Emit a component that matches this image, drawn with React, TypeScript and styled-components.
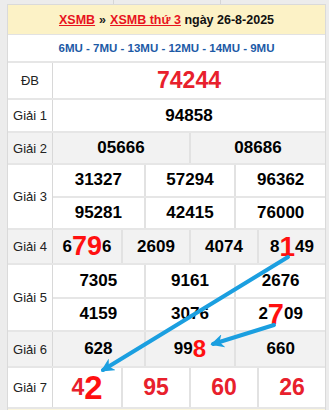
import React from 'react';
import styled, { createGlobalStyle } from 'styled-components';

const GlobalStyle = createGlobalStyle`
  html, body {
    margin: 0;
    padding: 0;
    background: #ececec;
    font-family: "Liberation Sans", Arial, sans-serif;
  }
`;

type Seg = { t: string; size?: number };
type Cell = Seg[];

interface Prize {
  label: string;
  height: number;
  alt?: boolean;
  red?: boolean;
  big?: boolean;
  rows: Cell[][];
}

const n = (s: string): Cell => [{ t: s }];

const prizes: Prize[] = [
  { label: 'ĐB', height: 35, red: true, big: true, rows: [[n('74244')]] },
  { label: 'Giải 1', height: 31, rows: [[n('94858')]] },
  { label: 'Giải 2', height: 30, alt: true, rows: [[n('05666'), n('08686')]] },
  {
    label: 'Giải 3',
    height: 63,
    rows: [
      [n('31327'), n('57294'), n('96362')],
      [n('95281'), n('42415'), n('76000')],
    ],
  },
  {
    label: 'Giải 4',
    height: 33,
    alt: true,
    rows: [
      [
        [{ t: '6' }, { t: '79', size: 27 }, { t: '6' }],
        n('2609'),
        n('4074'),
        [{ t: '8' }, { t: '1', size: 28 }, { t: '49' }],
      ],
    ],
  },
  {
    label: 'Giải 5',
    height: 65,
    rows: [
      [n('7305'), n('9161'), n('2676')],
      [n('4159'), n('3076'), [{ t: '2' }, { t: '7', size: 29 }, { t: '09' }]],
    ],
  },
  {
    label: 'Giải 6',
    height: 34,
    alt: true,
    rows: [[n('628'), [{ t: '99' }, { t: '8', size: 24 }], n('660')]],
  },
  {
    label: 'Giải 7',
    height: 39,
    red: true,
    big: true,
    rows: [[[{ t: '4' }, { t: '2', size: 33 }], n('95'), n('60'), n('26')]],
  },
];

export default function App() {
  return (
    <Page>
      <GlobalStyle />
      <PrevStrip>
        <span />
        <span />
        <span />
      </PrevStrip>
      <Table>
        <Header>
          <HeadLink href="#">XSMB</HeadLink>
          <Sep>»</Sep>
          <HeadLink href="#">XSMB thứ 3</HeadLink>
          <span> ngày 26-8-2025</span>
        </Header>
        <CodeRow>6MU - 7MU - 13MU - 12MU - 14MU - 9MU</CodeRow>
        {prizes.map((p) => (
          <PrizeRow key={p.label} $h={p.height} $alt={p.alt}>
            <Label>{p.label}</Label>
            <Numbers>
              {p.rows.map((row, i) => (
                <SubRow key={i} $cols={row.length}>
                  {row.map((cell, j) => (
                    <Num key={j} $red={p.red} $big={p.big}>
                      {cell.map((s, k) =>
                        s.size ? (
                          <Hot key={k} $size={s.size}>
                            {s.t}
                          </Hot>
                        ) : (
                          <React.Fragment key={k}>{s.t}</React.Fragment>
                        )
                      )}
                    </Num>
                  ))}
                </SubRow>
              ))}
            </Numbers>
          </PrizeRow>
        ))}
        <Footer />
      </Table>
      <Arrows width="329" height="410" viewBox="0 0 329 410">
        <defs>
          <marker
            id="head"
            viewBox="0 0 10 10"
            refX="8"
            refY="5"
            markerWidth="3.4"
            markerHeight="3.4"
            orient="auto"
          >
            <path d="M0,0 L10,5 L0,10 L3,5 z" fill="#1b9fe0" />
          </marker>
        </defs>
        <line
          x1="288"
          y1="257"
          x2="103"
          y2="370"
          stroke="#1b9fe0"
          strokeWidth="4"
          strokeLinecap="round"
          markerEnd="url(#head)"
        />
        <line
          x1="274"
          y1="325"
          x2="213"
          y2="344"
          stroke="#1b9fe0"
          strokeWidth="4"
          strokeLinecap="round"
          markerEnd="url(#head)"
        />
      </Arrows>
    </Page>
  );
}

const Page = styled.div`
  position: relative;
  width: 329px;
  height: 410px;
  overflow: hidden;
`;

const PrevStrip = styled.div`
  display: grid;
  grid-template-columns: 105px 107px 1fr;
  height: 4px;
  margin: 0 3px 0 8px;

  span + span {
    border-left: 1px solid #d6d6d6;
  }
`;

const Table = styled.div`
  margin-left: 7px;
  width: 319px;
  box-sizing: border-box;
  border: 1px solid #dadada;
  border-bottom: none;
  background: #fff;
`;

const Header = styled.div`
  height: 29px;
  background: #fcf2c6;
  display: flex;
  align-items: center;
  justify-content: center;
  font-size: 12.5px;
  font-weight: bold;
  color: #111;
  white-space: pre;
`;

const HeadLink = styled.a`
  color: #e8141e;
  text-decoration: underline;
`;

const Sep = styled.span`
  margin: 0 4px;
  color: #222;
`;

const CodeRow = styled.div`
  height: 26px;
  border-top: 1px solid #e2e2e2;
  display: flex;
  align-items: center;
  justify-content: center;
  font-size: 11.5px;
  font-weight: bold;
  color: #1c5aa6;
`;

const PrizeRow = styled.div<{ $h: number; $alt?: boolean }>`
  display: grid;
  grid-template-columns: 45px 1fr;
  height: ${({ $h }) => $h}px;
  border-top: 2px solid #e6e6e6;
  background: ${({ $alt }) => ($alt ? '#f2f2f2' : '#fff')};
`;

const Label = styled.div`
  display: flex;
  align-items: center;
  justify-content: center;
  border-right: 1px solid #d8d8d8;
  font-size: 13px;
  color: #222;
`;

const Numbers = styled.div`
  display: flex;
  flex-direction: column;
`;

const SubRow = styled.div<{ $cols: number }>`
  flex: 1;
  display: grid;
  grid-template-columns: repeat(${({ $cols }) => $cols}, 1fr);

  & + & {
    border-top: 2px solid #e6e6e6;
  }
`;

const Num = styled.div<{ $red?: boolean; $big?: boolean }>`
  display: flex;
  align-items: center;
  justify-content: center;
  font-weight: bold;
  font-size: ${({ $big }) => ($big ? 23 : 17)}px;
  color: ${({ $red }) => ($red ? '#e8202c' : '#000')};

  & + & {
    border-left: 2px solid #e2e2e2;
  }
`;

const Hot = styled.span<{ $size: number }>`
  font-size: ${({ $size }) => $size}px;
  color: #ff1010;
  line-height: 1;
`;

const Footer = styled.div`
  height: 10px;
  border-top: 2px solid #e6e6e6;
  background: #fcf6dc;
`;

const Arrows = styled.svg`
  position: absolute;
  top: 0;
  left: 0;
  pointer-events: none;
`;
